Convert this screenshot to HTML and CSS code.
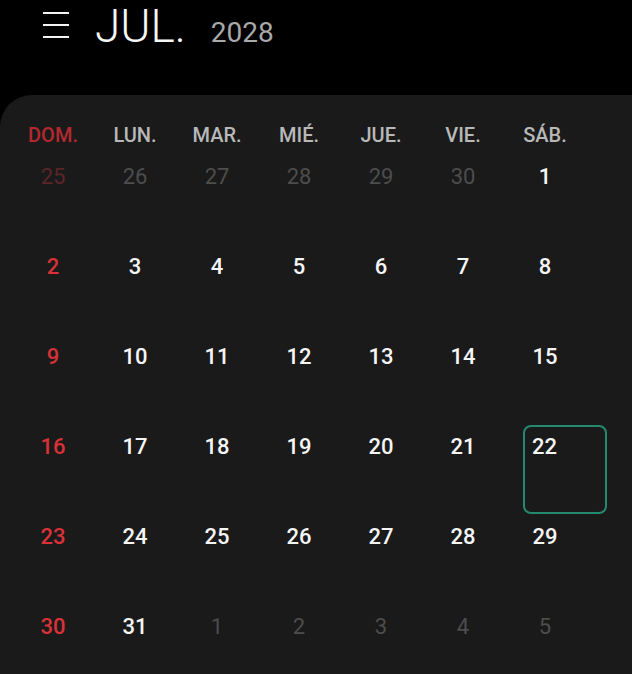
FILE: index.html
```html
<!DOCTYPE html>
<html lang="es">
<head>
<meta charset="utf-8">
<title>Calendario</title>
<link rel="stylesheet" href="styles.css">
</head>
<body>
<header class="top">
  <svg class="menu" width="28" height="28" viewBox="0 0 28 28">
    <path d="M1 2H27M1 14H27M1 26H27" stroke="#f2f2f2" stroke-width="2.2" fill="none"/>
  </svg>
  <div class="title">
    <span class="month">JUL.</span>
    <span class="year">2028</span>
  </div>
</header>
<main class="card">
  <div class="grid">
    <div class="wd sun"><span>DOM.</span></div>
    <div class="wd"><span>LUN.</span></div>
    <div class="wd"><span>MAR.</span></div>
    <div class="wd"><span>MIÉ.</span></div>
    <div class="wd"><span>JUE.</span></div>
    <div class="wd"><span>VIE.</span></div>
    <div class="wd"><span>SÁB.</span></div>

    <div class="day sun other"><span>25</span></div>
    <div class="day other"><span>26</span></div>
    <div class="day other"><span>27</span></div>
    <div class="day other"><span>28</span></div>
    <div class="day other"><span>29</span></div>
    <div class="day other"><span>30</span></div>
    <div class="day"><span>1</span></div>

    <div class="day sun"><span>2</span></div>
    <div class="day"><span>3</span></div>
    <div class="day"><span>4</span></div>
    <div class="day"><span>5</span></div>
    <div class="day"><span>6</span></div>
    <div class="day"><span>7</span></div>
    <div class="day"><span>8</span></div>

    <div class="day sun"><span>9</span></div>
    <div class="day"><span>10</span></div>
    <div class="day"><span>11</span></div>
    <div class="day"><span>12</span></div>
    <div class="day"><span>13</span></div>
    <div class="day"><span>14</span></div>
    <div class="day"><span>15</span></div>

    <div class="day sun"><span>16</span></div>
    <div class="day"><span>17</span></div>
    <div class="day"><span>18</span></div>
    <div class="day"><span>19</span></div>
    <div class="day"><span>20</span></div>
    <div class="day"><span>21</span></div>
    <div class="day today"><span>22</span></div>

    <div class="day sun"><span>23</span></div>
    <div class="day"><span>24</span></div>
    <div class="day"><span>25</span></div>
    <div class="day"><span>26</span></div>
    <div class="day"><span>27</span></div>
    <div class="day"><span>28</span></div>
    <div class="day"><span>29</span></div>

    <div class="day sun"><span>30</span></div>
    <div class="day"><span>31</span></div>
    <div class="day other"><span>1</span></div>
    <div class="day other"><span>2</span></div>
    <div class="day other"><span>3</span></div>
    <div class="day other"><span>4</span></div>
    <div class="day other"><span>5</span></div>
  </div>
</main>
</body>
</html>
```

FILE: styles.css
```css
* {
  box-sizing: border-box;
}

html, body {
  margin: 0;
  padding: 0;
  background: #000;
  height: 100%;
  overflow: hidden;
}

body {
  font-family: Roboto, "Liberation Sans", sans-serif;
  color: #f5f5f5;
}

.top {
  height: 95px;
  display: flex;
  align-items: flex-start;
  padding-left: 42px;
}

.menu {
  margin-top: 11px;
  margin-right: 25px;
  flex: none;
}

.title {
  display: flex;
  align-items: baseline;
  padding-top: 4px;
}

.month {
  font-size: 46px;
  line-height: 45px;
  font-weight: 300;
  color: #f7f7f7;
}

.year {
  font-size: 28px;
  line-height: 28px;
  font-weight: 400;
  color: #a9a9a9;
  margin-left: 25px;
}

.card {
  background: #1a1a1a;
  border-top-left-radius: 32px;
  height: 600px;
}

.grid {
  display: grid;
  grid-template-columns: repeat(7, 82px);
  grid-template-rows: 60px;
  grid-auto-rows: 90px;
  padding-left: 31px;
}

.wd {
  padding-top: 28px;
  width: 44px;
  display: flex;
  justify-content: center;
  font-size: 20px;
  line-height: 24px;
  font-weight: 500;
  color: #b8b8b8;
  white-space: nowrap;
}

.wd.sun {
  color: #b3292f;
}

.day {
  width: 44px;
  height: 89px;
  padding-top: 9px;
  display: flex;
  justify-content: center;
  align-items: flex-start;
  font-size: 22px;
  line-height: 26px;
  font-weight: 500;
  color: #f5f5f5;
}

.day.sun {
  color: #d83238;
}

.day.other {
  color: #4d4d4d;
  font-weight: 400;
}

.day.sun.other {
  color: #5a2629;
}

.day.today {
  width: 84px;
  border: 2px solid #24896d;
  border-radius: 8px;
  padding-top: 7px;
  justify-content: flex-start;
  padding-left: 7px;
}
```
